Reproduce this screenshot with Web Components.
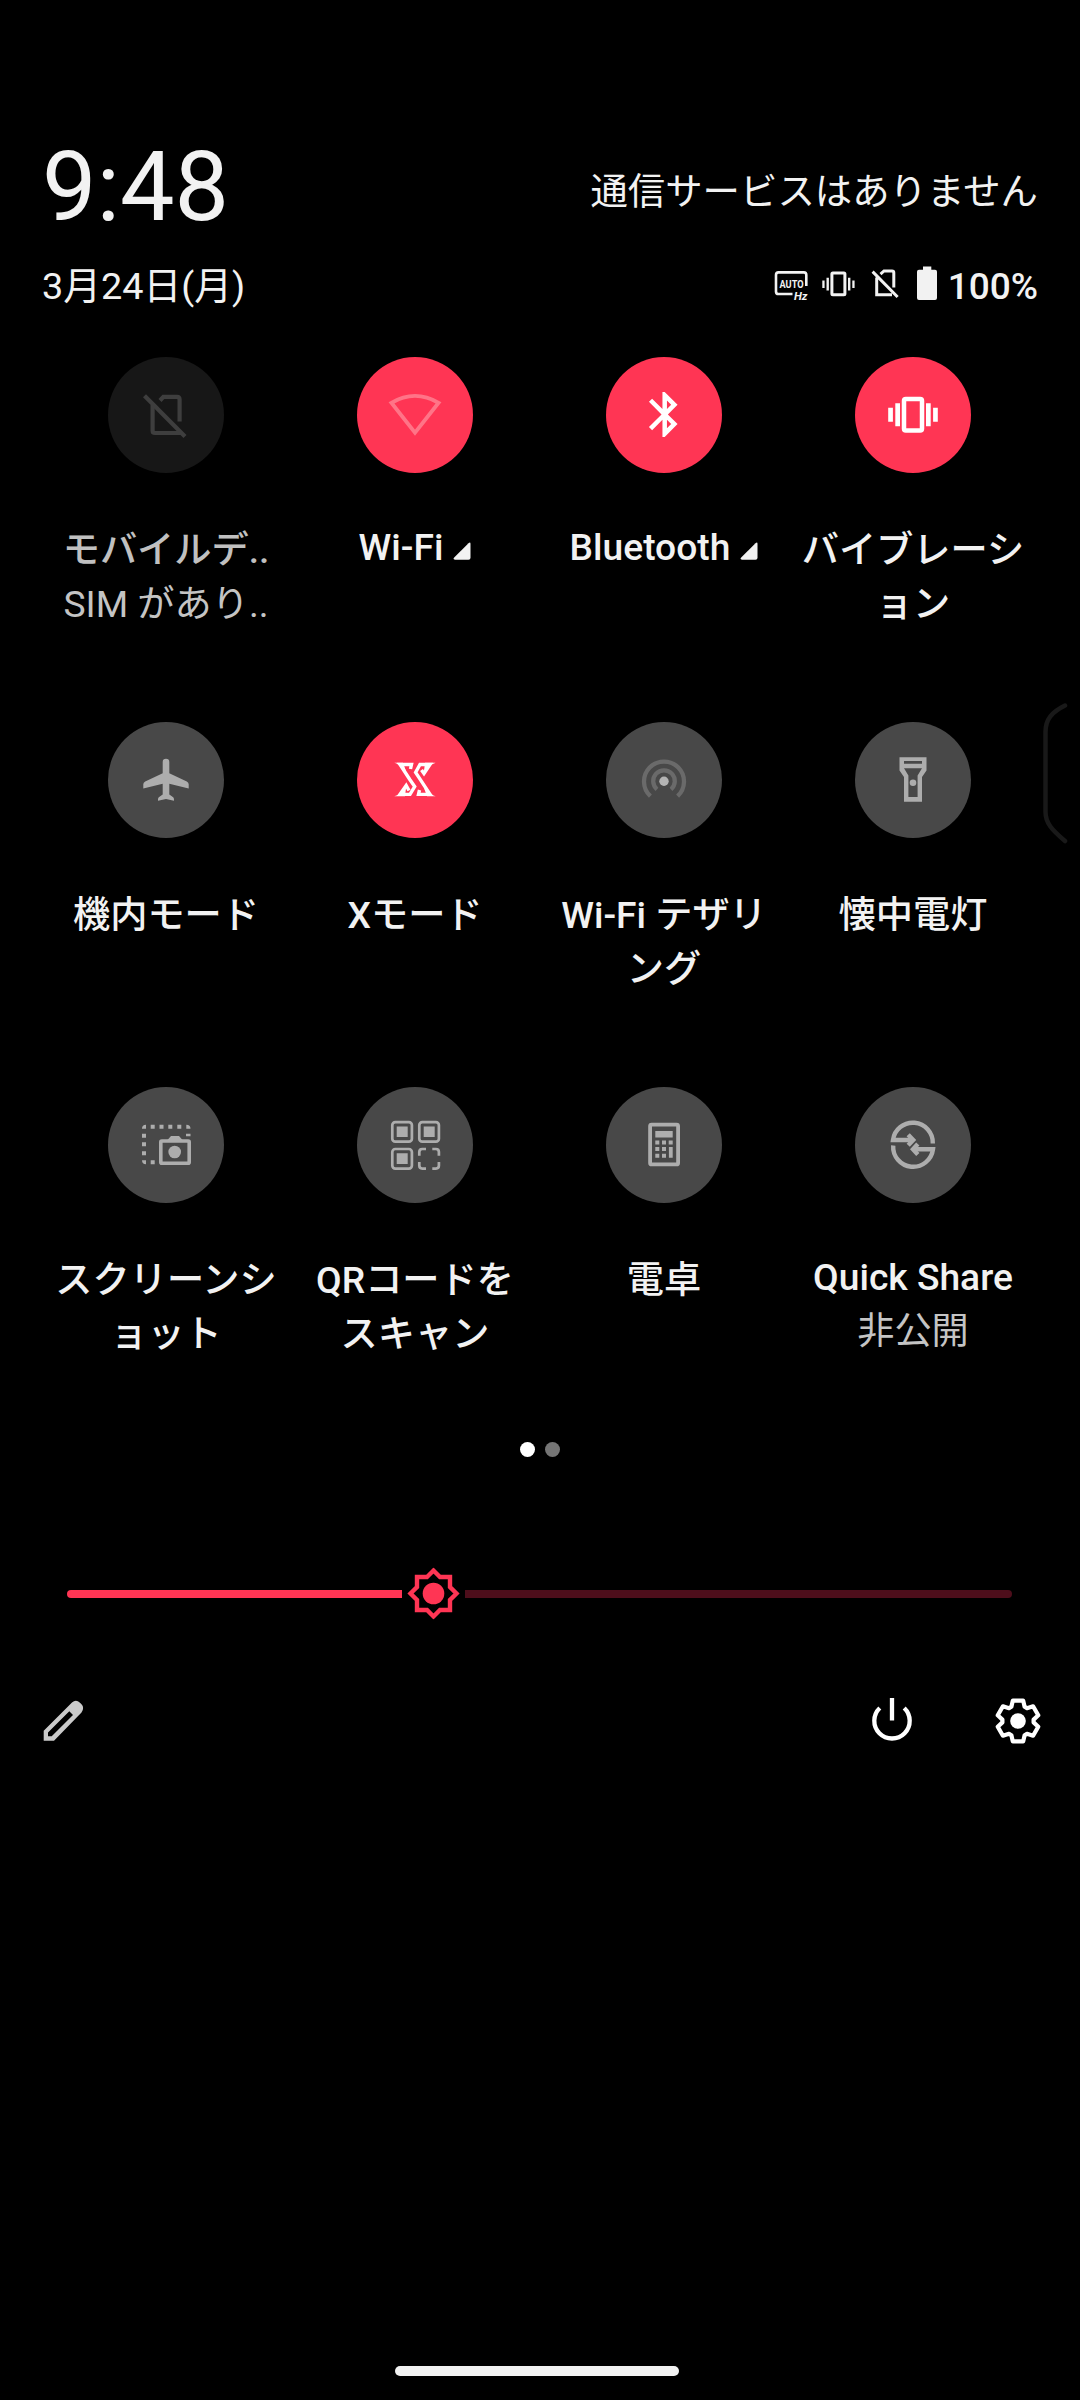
<!DOCTYPE html>
<html lang="ja">
<head>
<meta charset="utf-8">
<title>クイック設定</title>
<style>
html,body{margin:0;background:#000}
body{font-family:Roboto,"Noto Sans CJK JP",sans-serif;color:#f2f2f2;width:1080px;height:2400px;overflow:hidden}
</style>
</head>
<body>
<quick-panel></quick-panel>
<script>
const define = (name, html, after) => {
  const t = document.createElement('template');
  t.innerHTML = html;
  customElements.define(name, class extends HTMLElement {
    constructor() {
      super();
      this.attachShadow({mode: 'open'}).append(t.content.cloneNode(true));
    }
    connectedCallback() { if (after) after(this, this.shadowRoot); }
  });
};

/* Tile glyphs, drawn around the centre of the 116px disc */
const glyphs = {
  simOff: '<g fill="none" stroke="currentColor" stroke-width="4.2"><path d="M-6-14.5-2.6-18.2H11Q13.6-18.2 13.6-15.6V6.5M-13.4-10V15.500Q-13.400 18-11 18H15"/><path d="M-21.500-19.200 19 21.500"/></g>',
  wifi: '<path d="M-23.600-12.200Q0-26 23.600-12.200L0 17.600Z" fill="none" stroke="currentColor" stroke-width="3.800"/>',
  bluetooth: '<path transform="translate(-26.300 -27.600) scale(2.250)" fill="currentColor" d="M17.710 7.710L12 2h-1v7.590L6.410 5 5 6.410 10.590 12 5 17.590 6.410 19 11 14.410V22h1l5.710-5.710-4.300-4.290 4.300-4.290zM13 5.830l1.880 1.880L13 9.590V5.830zm1.880 10.460L13 18.170v-3.760l1.880 1.880z"/>',
  vibrate: '<rect x="-9" y="-16" width="18" height="31.500" rx="1.800" fill="none" stroke="currentColor" stroke-width="4.500"/><path fill="currentColor" d="M-17.700-11.700h4.700V11.200h-4.700zM13-11.700h4.700V11.200H13zM-24.800-7.300h4.700V6.800h-4.700zM20.100-7.300h4.700V6.800h-4.700z"/>',
  plane: '<path fill="currentColor" d="M-3.300-18Q-3.300-21.300 0-21.300T3.300-18V-6.800L20.800 1.500Q22.700 2.500 22.700 4.200V8.400L3.300 3.800V14.500L7.200 17.300Q8.200 18 8 20.800L0 19-8 20.800Q-8.200 18-7.200 17.300L-3.300 14.500V3.800L-22.700 8.400V4.200Q-22.700 2.500-20.800 1.500L-3.300-6.800Z"/>',
  xmode: '<g fill="none" stroke="currentColor" stroke-width="3.400"><path d="M-4.500-11-3.500-15.500H-15L-5.200-.5-.3 6.500-5 14.400H-15L-8.800 5.500-6 10.500"/><path d="M4.500 10 3.500 14.400H15L5.200-.6.600-7.600 5-15.500H15L9-6.500 6.500-10"/></g><path fill="currentColor" d="M-20.700-17.200H-12L-9-9-13.500-12Q-16-16-20.700-17.200ZM20.700 16.200H12L9 8 13.500 11Q16 15 20.700 16.200ZM-20.700 16.200H-10L-9 8-14 12Q-16 15-20.700 16.200ZM20.700-17.200H10L9-9 14-13Q16-16 20.700-17.200Z"/>',
  hotspot: '<g fill="none" stroke="#6a6a6a" stroke-width="4.300"><path d="M-7 9.300A10.800 10.800 0 1 1 7 9.300"/><path d="M-13.600 16.200A20 20 0 1 1 13.600 16.200"/></g><circle cy="1.300" r="4.700" fill="#b4b4b4"/>',
  torch: '<path fill="currentColor" fill-rule="evenodd" d="M-13.500-22.700H13.500V-9.500L9-3V21.700H-9V-3L-13.500-9.500ZM-9-19V-16.200H9V-19ZM-9-11.800-4.600-4.500V17H4.600V-4.500L9-11.800Z"/><circle cy="2.700" r="3.300" fill="currentColor"/>',
  shot: '<path fill="currentColor" d="M-24-16.500Q-24-20.300-20-20.300V-16.300H-24ZM-15.300-20.300h4v4h-4zM-6.500-20.300h4v4h-4zM2.300-20.300h4v4h-4zM11.300-20.300h4v4h-4zM20.300-20.300Q24.500-20.300 24.500-16.300H20.300ZM20-11.300h4.500v2.600H20zM-24-11.300h4v4h-4zM-24-2.700h4v4h-4zM-24 6.300h4v4h-4zM-24 15.300h4v4Q-24 19.300-24 15.300ZM-15.300 15.300h4v4h-4z"/><rect x="-5.200" y="-4" width="28.400" height="22.300" rx="1" fill="none" stroke="currentColor" stroke-width="3.600"/><path fill="currentColor" d="M1.500-5 5-9H13L16.500-5Z"/><circle cx="8.700" cy="7" r="6.300" fill="currentColor"/>',
  qr: '<g fill="none" stroke="currentColor" stroke-width="2.700"><rect x="-22.700" y="-22.900" width="19.600" height="19.600" rx="3"/><rect x="4.300" y="-22.900" width="19.600" height="19.600" rx="3"/><rect x="-22.700" y="4" width="19.600" height="19.600" rx="3"/><path d="M4.300 10.700V7Q4.300 4 7.300 4H11M17.300 4H20.900Q23.900 4 23.900 7V10.700M23.900 17V20.600Q23.900 23.600 20.900 23.600H17.300M11 23.600H7.300Q4.300 23.600 4.300 20.600V17"/></g><path fill="currentColor" d="M-18.300-18.600h11v10.600h-11zM8.700-18.600h11v10.600h-11zM-18.300 8.300h11v10.600h-11z"/>',
  calc: '<rect x="-13.900" y="-20.400" width="28" height="39.800" rx="1.500" fill="none" stroke="currentColor" stroke-width="3.800"/><path fill="currentColor" d="M-8.700-14H8.700V-7.600H-8.700ZM-8.700-4.600h4v4h-4zM-2-4.600h4v4h-4zM4.700-4.600h4v4h-4zM-8.700 2.100h4v4h-4zM-2 2.100h4v4h-4zM4.900 2.100h3.800V12.800H4.900zM-8.700 8.800h4v4h-4zM-2 8.800h4v4h-4z"/>',
  share: '<g fill="none" stroke="currentColor" stroke-width="4.400"><path d="M-1.500-5H-20A20 20 0 0 1 19.800-1.500M1.500 4.300H20A20 20 0 0 1-19.800.5"/><path d="M-4.800-10.300.2-5-4.800.3M4.800-1 0 4.300 4.800 9.500"/></g>'
};

define('qs-tile', `
<style>
:host{display:flex;flex-direction:column;align-items:center;width:249px;height:365px;font-size:37.200px;line-height:54px;--disc:#484848;--ink:#adadad;text-align:center}
:host([state=on]){--disc:#ff3554;--ink:#fff}
:host([state=dim]){--disc:#171717;--ink:#3e3e3e}
.disc{width:116px;height:116px;border-radius:50%;background:var(--disc);color:var(--ink);flex:none}
:host([glyph=wifi]) .disc{color:#ff7487}
.disc svg{display:block}
.label{display:flex;justify-content:center;align-items:baseline;gap:10px;margin-top:50px;font-weight:500;width:228px;line-break:anywhere}
:host([latin]) .label{margin-top:47px}
.sub{color:#c4c4c4}
:host([state=dim]) .label{color:#c0c0c0}
.more{display:none;flex:none}
:host([more]) .more{display:block}
</style>
<div class="disc"><svg width="116" height="116" viewBox="-58 -58 116 116"></svg></div>
<div class="label"><span><slot></slot></span><svg class="more" width="18" height="18" viewBox="0 0 18 18"><path d="M2 17.700H15.500Q17.500 17.700 17.500 15.700V2Q17.500-.5 15.500 1.200L1.200 15.500Q-.5 17.500 2 17.700Z" fill="#f2f2f2"/></svg></div>
<div class="sub"><slot name="sub"></slot></div>`,
(el, r) => { r.querySelector('svg').innerHTML = glyphs[el.getAttribute('glyph')]; });

define('status-icons', `
<style>:host{display:flex;align-items:baseline;gap:9px;font-size:37px;line-height:44px;font-weight:500}svg{display:block;margin-top:-10px;transform:translateY(4.400px)}</style>
<svg width="166" height="38" viewBox="773 265 166 38">
<g fill="none" stroke="#f2f2f2" stroke-width="2.600">
<path d="M806.300 285.500V274.500Q806.300 272 803.800 272H778.500Q776 272 776 274.500V291Q776 293.600 778.500 293.600H792.500"/>
<rect x="831.900" y="272.700" width="13" height="21.600" rx="1" stroke-width="3"/>
<path stroke-width="3" d="M880.500 273.700 884 270.600H892Q893.800 270.600 893.800 272.400V287M876.700 277V294.300H892M872.600 271.200 897.600 296.600"/></g>
<path fill="#f2f2f2" d="M826.500 277.300h2.400v12.700h-2.400zM822.300 280h2.300v7.500h-2.300zM848 277.300h2.400v12.700H848zM852.300 280h2.300v7.500h-2.300zM919 269.300H923V266H931.300V269.300H935Q937 269.300 937 271.300V297.700Q937 299.700 935 299.700H919Q917 299.700 917 297.700V271.300Q917 269.300 919 269.300Z"/>
<text x="779.500" y="287.300" font-family="Roboto" font-weight="700" font-size="11.500" textLength="24" lengthAdjust="spacingAndGlyphs" fill="#f2f2f2">AUTO</text>
<text x="794" y="299.300" font-family="Roboto" font-weight="700" font-style="italic" font-size="10.500" textLength="13.500" lengthAdjust="spacingAndGlyphs" fill="#f2f2f2">Hz</text>
</svg>
<span><slot></slot></span>`);

define('panel-header', `
<style>
:host{display:block;padding:131px 42px 0}
.row{display:flex;justify-content:space-between}
.clock{font-size:97px;line-height:112px}
.carrier{font-size:37.400px;line-height:44px;margin-top:39px}
.second{margin-top:21px;align-items:baseline;height:44px}
.date{font-size:37.800px;line-height:44px}
</style>
<div class="row"><div class="clock"><slot name="clock"></slot></div><div class="carrier"><slot name="carrier"></slot></div></div>
<div class="row second"><div class="date"><slot name="date"></slot></div><status-icons>100%</status-icons></div>`);

define('page-dots', `
<style>:host{display:flex;justify-content:center;gap:10px}i{width:15px;height:15px;border-radius:50%;background:#fff}i+i{background:#757575}</style><i></i><i></i>`);

define('brightness-slider', `
<style>
:host{display:flex;align-items:center;height:52px;padding:0 68px 0 67px}
.on{width:335px;height:8px;border-radius:4px 0 0 4px;background:#ff3554}
.off{flex:1;height:8px;border-radius:0 4px 4px 0;background:#4d0e1b}
svg{display:block;width:63px;height:52px;transform:translateY(-.500px)}
</style>
<div class="on"></div>
<svg viewBox="-31.500 -26 63 52"><path fill="none" stroke="#ff3554" stroke-width="4.400" d="M-6.500-16.500 0-23 6.500-16.500H16.500V-6.500L23 0 16.500 6.500V16.500H6.500L0 23-6.500 16.500H-16.500V6.500L-23 0-16.500-6.500V-16.500Z"/><circle r="10.800" fill="#ff3554"/></svg>
<div class="off"></div>`);

define('panel-footer', `
<style>:host{display:flex;align-items:center;height:50px;padding:0 37px 0 38px}.end{display:flex;gap:76px;margin-left:auto}svg{display:block}</style>
<svg width="50" height="50" viewBox="38 1696 50 50"><path fill="#cacaca" fill-rule="evenodd" d="M43.700 1740.700V1730.700L72 1702.500Q76 1699 80 1702.700L81.500 1704.200Q84.800 1707.800 81.500 1712.500L54 1740.700ZM48 1736.300H51.700L73 1715 69.300 1711.300 48 1732.500Z"/></svg>
<div class="end">
<svg width="50" height="50" viewBox="-25 -25 50 50"><g fill="none" stroke="#fff" stroke-width="4.300"><path d="M-12.200-13A17.700 17.700 0 1 0 12.200-13M0-23V-.5"/></g></svg>
<svg width="50" height="50" viewBox="-25 -25 50 50"><path class="gear" fill="none" stroke="#fff" stroke-width="4.200" stroke-linejoin="round"/><circle r="7.800" fill="#fff"/></svg>
</div>`,
(el, r) => {
  /* Six teeth, each a trapezoid pointing outwards */
  let pts = [];
  for (let i = 0; i < 6; i++) {
    const a = i * Math.PI / 3, c = Math.cos(a), s = Math.sin(a);
    for (const [x, y] of [[-6.6, -14.2], [-5.2, -20.4], [5.2, -20.4], [6.6, -14.2]])
      pts.push((x * c - y * s).toFixed(2) + ' ' + (x * s + y * c).toFixed(2));
  }
  r.querySelector('.gear').setAttribute('d', 'M' + pts.join('L') + 'Z');
});

define('edge-handle', `
<style>:host{position:absolute;left:1040px;top:698px;display:block}svg{display:block}</style>
<svg width="40" height="146" viewBox="1040 698 40 146"><path d="M1065 705.500C1052 712 1045.500 719 1045.500 732V812C1045.500 823 1052 830 1065 841" fill="none" stroke="#191919" stroke-width="4.500" stroke-linecap="round"/></svg>`);

define('quick-panel', `
<style>
:host{display:flex;flex-direction:column;width:1080px;height:2400px;background:#000;position:relative}
.tiles{display:grid;grid-template-columns:repeat(4,249px);justify-content:center;margin-top:49px;height:1085px;margin-left:-1px}
brightness-slider{margin-top:111px}
panel-footer{margin-top:76px}
.pill{width:284px;height:10px;border-radius:5px;background:#f2f2f2;margin:auto auto 24px 395px}
</style>
<panel-header><span slot="clock">9:48</span><span slot="carrier">通信サービスはありません</span><span slot="date">3月24日(月)</span></panel-header>
<div class="tiles">
<qs-tile glyph="simOff" state="dim">モバイルデ..<span slot="sub">SIM があり..</span></qs-tile>
<qs-tile glyph="wifi" state="on" latin more>Wi-Fi</qs-tile>
<qs-tile glyph="bluetooth" state="on" latin more>Bluetooth</qs-tile>
<qs-tile glyph="vibrate" state="on">バイブレーション</qs-tile>
<qs-tile glyph="plane">機内モード</qs-tile>
<qs-tile glyph="xmode" state="on">Xモード</qs-tile>
<qs-tile glyph="hotspot">Wi-Fi テザリング</qs-tile>
<qs-tile glyph="torch">懐中電灯</qs-tile>
<qs-tile glyph="shot">スクリーンショット</qs-tile>
<qs-tile glyph="qr">QRコードをスキャン</qs-tile>
<qs-tile glyph="calc">電卓</qs-tile>
<qs-tile glyph="share" latin>Quick Share<span slot="sub">非公開</span></qs-tile>
</div>
<page-dots></page-dots>
<brightness-slider></brightness-slider>
<panel-footer></panel-footer>
<div class="pill"></div>
<edge-handle></edge-handle>`);
</script>
</body>
</html>
